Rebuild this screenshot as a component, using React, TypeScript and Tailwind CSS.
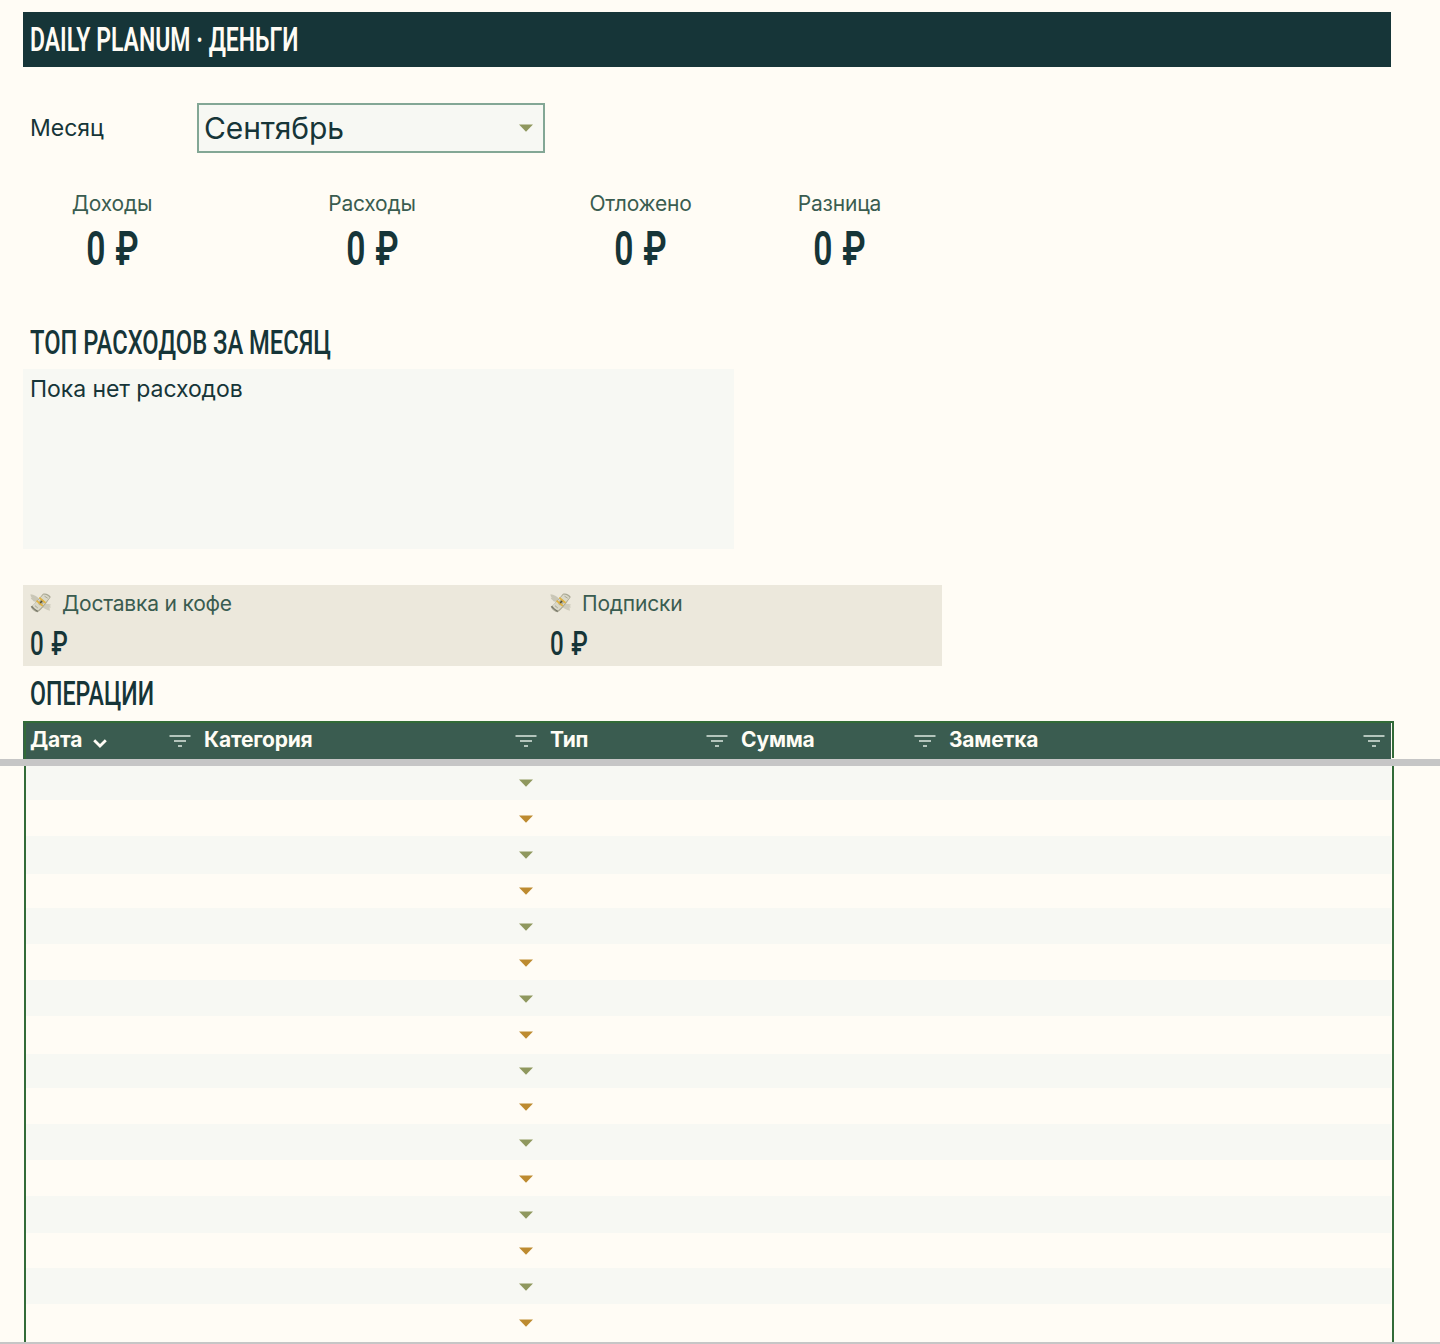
import React from "react";

type CondensedProps = {
    children: React.ReactNode;
    className?: string;
};

const Condensed: React.FC<CondensedProps> = ({ children, className = "" }) => {
    return (
        <span className={`block w-max whitespace-nowrap font-['Roboto','Liberation_Sans',sans-serif] ${className}`}>
            {children}
        </span>
    );
};

const Caret: React.FC<{ color: string }> = ({ color }) => {
    return (
        <svg className={`block ${color}`} width="14" height="8" viewBox="0 0 14 8">
            <path d="M0 0.5h14L7 7.7z" fill="currentColor" />
        </svg>
    );
};

const FilterIcon: React.FC = () => {
    return (
        <svg className="block" width="22" height="12" viewBox="0 0 22 12" fill="#d3dfd7">
            <rect x="0.5" y="0.2" width="21" height="1.6" />
            <rect x="5" y="5.2" width="12" height="1.6" />
            <rect x="9" y="10.2" width="4" height="1.6" />
        </svg>
    );
};

const MoneyIcon: React.FC = () => {
    return (
        <svg className="mb-[2px] block" width="22" height="20" viewBox="0 0 22 20">
            <path d="M9 6C7 3 4 1.700.5 1.200c0 1.800.6 2.800 1.400 3.400-.6.2-.9.2-1.300.1.600 1.600 1.700 2.300 2.800 2.600-.3.200-.6.300-1 .3 1 1 2.600 1.200 4.600.9z" fill="#c9c6b6" />
            <path d="M13.500 11.500c2.500-1.200 5-.8 7.700.3-.7.600-1.100.800-1.700.9.800.500 1.200 1 1.500 1.800-.8.200-1.300.1-1.800 0 .5.800.7 1.500.7 3.300-3-1-6.400-2.500-8.400-4.300z" fill="#cfccbc" />
            <path d="M.8 13.800C5 11 9 5 13 .8c2.500-1 6 .3 7.800 3.200C17.500 8.500 12.500 16 7.500 19.300 5 18.800 2 17 .8 13.800z" fill="#a9a793" />
            <path d="M.8 13.800l6.700 5.500.4-1.800-5.700-4.600z" fill="#77776a" />
            <path d="M2.300 12.700C6.500 9.500 10.500 4.500 13.600 1.500c2.200 0 4.600 1.200 6 3C15.500 9.500 12 14.500 8 17.500c-2-.8-4.500-2.600-5.700-4.800z" fill="#dad8c8" />
            <path d="M14.500 3.200l3.200 2M5 12.700l2.800 2.300" stroke="#aaa894" strokeWidth="1" />
            <ellipse cx="11.200" cy="9.300" rx="2.400" ry="3.200" transform="rotate(42 11.2 9.3)" fill="#b3b199" />
            <path d="M8.700 5.200l1.200-1.300 6.200 5.300-1.100 1.400z" fill="#e2b33f" />
            <path d="M6 8.200l1.200-1.300 6.100 5.300-1.200 1.400z" fill="#e2b33f" />
            <path d="M10.200 9.900l1.900-1.900" stroke="#4f4c33" strokeWidth="1.500" />
        </svg>
    );
};

const totals = [
    { label: "Доходы", width: "w-[178px]" },
    { label: "Расходы", width: "w-[342px]" },
    { label: "Отложено", width: "w-[195px]" },
    { label: "Разница", width: "w-[203px]" },
];

const columns = [
    { label: "Дата", width: "w-[174px]", sorted: true },
    { label: "Категория", width: "w-[346px]" },
    { label: "Тип", width: "w-[191px]" },
    { label: "Сумма", width: "w-[208px]" },
    { label: "Заметка", width: "w-[449px]" },
];

const bands = [
    "h-[34px]", "h-[36px]", "h-[38px]", "h-[34px]", "h-[36px]", "h-[36px]", "h-[36px]", "h-[38px]",
    "h-[34px]", "h-[36px]", "h-[36px]", "h-[36px]", "h-[37px]", "h-[35px]", "h-[36px]", "h-[36px]",
];

export default function App() {
    return (
        <div className="h-[1344px] w-[1440px] overflow-hidden bg-[#fffcf5] font-['Inter',sans-serif] text-[#163538]">
            {/* Title */}
            <div className="ml-[23px] mt-3 flex h-[55px] w-[1368px] items-center bg-[#163538] pl-[7px] text-[#fffcf5]">
                <Condensed className="origin-left scale-x-[0.677] text-[34px] font-semibold">DAILY PLANUM · ДЕНЬГИ</Condensed>
            </div>

            {/* Month */}
            <div className="ml-[23px] mt-9 flex h-[50px] items-center">
                <span className="w-[174px] pl-[7px] text-[23px]">Месяц</span>
                <div className="flex h-[50px] w-[348px] items-center justify-between border-2 border-[#83a795] bg-[#f7f8f3] pl-[5px] pr-[10px]">
                    <span className="text-[30px] tracking-[-0.1px]">Сентябрь</span>
                    <Caret color="text-[#8f985e]" />
                </div>
            </div>

            {/* Totals */}
            <div className="ml-[23px] mt-[35px] flex h-[92px]">
                {totals.map((item) => (
                    <div key={item.label} className={`flex flex-col items-center ${item.width}`}>
                        <span className="text-[21px] leading-[32px] tracking-[-0.2px] text-[#3a5c50]">{item.label}</span>
                        <Condensed className="scale-x-[0.7] pt-px text-[48px] font-semibold leading-[56px] [word-spacing:2px]">0 ₽</Condensed>
                    </div>
                ))}
            </div>

            {/* Top expenses */}
            <div className="ml-[30px] mt-[37px] flex h-[50px] items-center">
                <Condensed className="origin-left scale-x-[0.698] text-[34px] font-medium">ТОП РАСХОДОВ ЗА МЕСЯЦ</Condensed>
            </div>
            <div className="ml-[23px] mt-[2px] h-[180px] w-[711px] bg-[#f7f8f3] pl-[7px] text-[23px] leading-[40px] tracking-[-0.07px]">
                Пока нет расходов
            </div>

            {/* Categories */}
            <div className="ml-[23px] mt-9 flex h-[81px] w-[919px] bg-[#ece8dc]">
                {["Доставка и кофе", "Подписки"].map((label) => (
                    <div key={label} className="w-[520px] pl-[7px] last:w-[399px]">
                        <div className="flex h-[38px] items-center gap-[10px] text-[21px] tracking-[-0.2px] text-[#3a5c50]">
                            <MoneyIcon />
                            <span>{label}</span>
                        </div>
                        <Condensed className="origin-left scale-x-[0.71] text-[34px] font-medium leading-[40px] [word-spacing:2px]">0 ₽</Condensed>
                    </div>
                ))}
            </div>

            {/* Operations */}
            <div className="ml-[30px] flex h-[55px] items-center">
                <Condensed className="origin-left scale-x-[0.682] text-[34px] font-medium">ОПЕРАЦИИ</Condensed>
            </div>
            <div className="ml-[23px] h-[38px] w-[1371px] border-t-2 border-[#326b38]">
                <div className="flex h-9 justify-between">
                    <div className="flex w-[1368px] border-l border-[#3a5c50] bg-[#3a5c50] text-[#fffcf5]">
                        <div className="-mr-[2px] w-[2px] shrink-0 bg-[#326b38]" />
                        {columns.map((column) => (
                            <div key={column.label} className={`flex items-center justify-between pl-[7px] pr-[6px] first-of-type:pl-[6px] ${column.width} ${column.sorted ? "-ml-px" : ""}`}>
                                <div className="-mt-[2px] flex items-center gap-[11px] text-[21px] font-bold tracking-[-0.2px]">
                                    <span>{column.label}</span>
                                    {column.sorted && (
                                        <svg className="mt-[6px] block" width="14" height="9" viewBox="0 0 14 9" fill="none" stroke="currentColor" strokeWidth="2.8">
                                            <path d="M1.2 1.2L7 7l5.800-5.800" />
                                        </svg>
                                    )}
                                </div>
                                <FilterIcon />
                            </div>
                        ))}
                    </div>
                    <div className="h-[35px] w-[2px] bg-[#326b38]" />
                </div>
            </div>
            <div className="h-[7px] bg-[#c6c6c6]" />
            <div className="ml-6 grid h-[576px] w-[1370px] overflow-hidden border-x-2 border-[#326b38]">
                <div className="mr-px [grid-area:1/1]">
                    {bands.map((height, i) => (
                        <div key={i} className={`${height} ${i % 2 === 0 ? "bg-[#f7f8f3]" : ""}`} />
                    ))}
                </div>
                <div className="-mt-px pl-[493px] [grid-area:1/1]">
                    {bands.map((_, i) => (
                        <div key={i} className="flex h-9 items-center">
                            <Caret color={i % 2 === 0 ? "text-[#8f985e]" : "text-[#bd8b30]"} />
                        </div>
                    ))}
                </div>
            </div>
            <div className="h-[2px] bg-[#c6c6c6]" />
        </div>
    );
}
